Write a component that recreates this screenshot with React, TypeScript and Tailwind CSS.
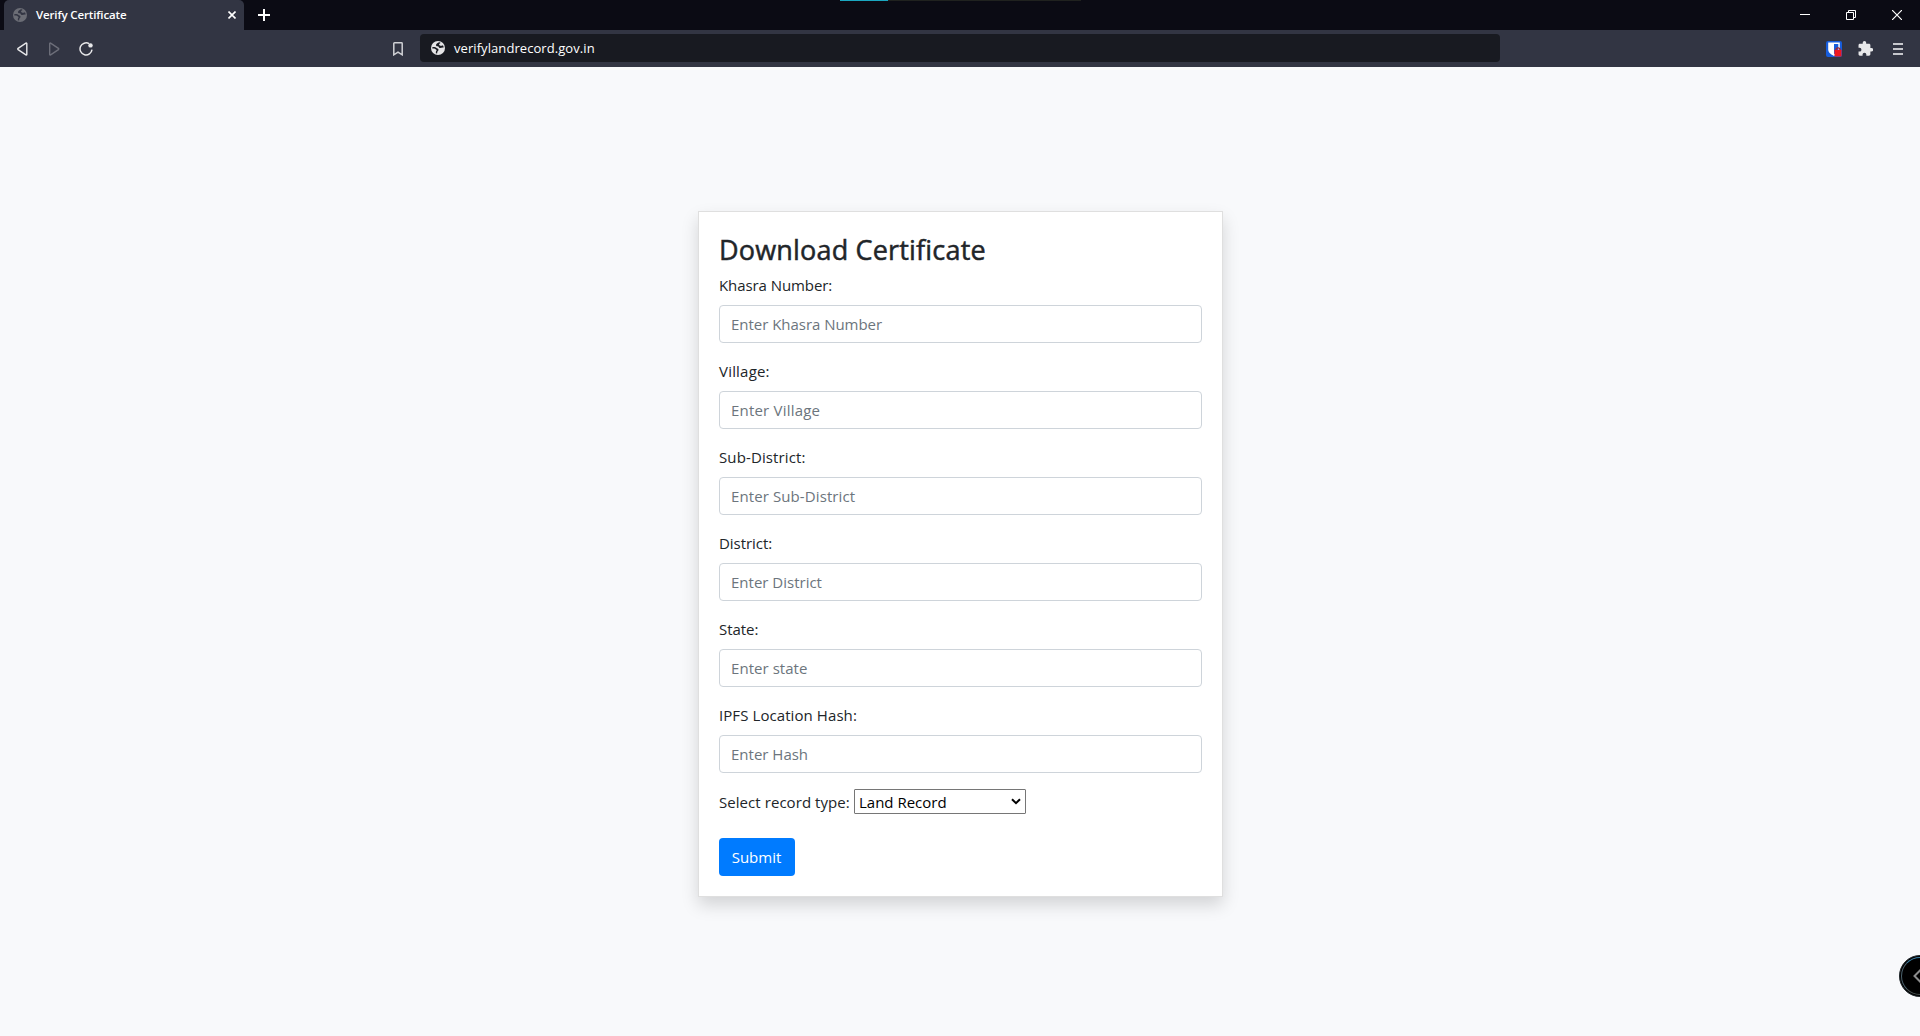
import React from "react";

type Field = { label: string; placeholder: string; labelClass: string; inputClass: string };

const fields: Field[] = [
  { label: "Khasra Number:", placeholder: "Enter Khasra Number", labelClass: "tracking-[-0.08px]", inputClass: "tracking-[-0.03px]" },
  { label: "Village:", placeholder: "Enter Village", labelClass: "tracking-[0.2px]", inputClass: "tracking-[0.2px]" },
  { label: "Sub-District:", placeholder: "Enter Sub-District", labelClass: "tracking-[0.12px]", inputClass: "tracking-[0.1px]" },
  { label: "District:", placeholder: "Enter District", labelClass: "tracking-[-0.05px]", inputClass: "" },
  { label: "State:", placeholder: "Enter state", labelClass: "tracking-[-0.05px]", inputClass: "tracking-[0.05px]" },
  { label: "IPFS Location Hash:", placeholder: "Enter Hash", labelClass: "tracking-[0.08px]", inputClass: "" },
];

function Globe({ className, cut }: { className: string; cut: string }) {
  return (
    <svg viewBox="0 0 14 14" className={className}>
      <circle cx="7" cy="7" r="7" fill="currentColor" />
      <path
        d="M8.800 1.300C7 1.600 5.200 2.600 5 4c-.1 1.100.9 1.300 1.900 1.200.9 0 .7 1.600 2 1.700 1.300.1 2.200-.7 3.800-.4-.1-.9-.4-1.600-.8-2.300-.9.300-1.700.8-2.500.5-.9-.4-1.500-.8-1.300-1.500.1-.6 1-.9 1.500-1.300z"
        fill={cut}
      />
      <path
        d="M1.300 6.200c1.600-.2 3.500-.1 4.200.8.500.6 1.500.5 1.900 1.200.4.900-.3 1.700-.9 2.200-.4.500-.1 1.300-.4 2.200l-1.300-.3c.2-1-.1-1.900.5-2.600.4-.5.5-.8-.1-1-.9-.2-1.200-.9-1.900-1.100-.7-.1-1.400 0-2 0z"
        fill={cut}
      />
    </svg>
  );
}

function TabStrip() {
  return (
    <div className="relative flex h-[30px] bg-[#0b0b14] pl-1">
      <div className="flex h-[30px] w-60 items-center rounded-t-[5px] bg-[#323543] pl-[9px] pr-2">
        <Globe className="size-[14px] shrink-0 text-[#6b6d75]" cut="#323543" />
        <span className="ml-[9px] flex-1 whitespace-nowrap text-[11.5px] font-semibold leading-[30px] tracking-[-0.13px] text-white">
          Verify Certificate
        </span>
        <svg viewBox="0 0 8 8" className="size-2 text-white">
          <path d="M.5.5l7 7M7.500.5l-7 7" stroke="currentColor" strokeWidth="1.6" />
        </svg>
      </div>
      <div className="flex items-center pl-[14px]">
        <svg viewBox="0 0 12 12" className="size-3 text-white">
          <path d="M6 0v12M0 6h12" stroke="currentColor" strokeWidth="2" />
        </svg>
      </div>
      <div className="ml-auto flex items-center gap-9 pr-[18px] text-white">
        <svg viewBox="0 0 10 10" className="size-[10px]">
          <path d="M0 4.500h10" stroke="currentColor" />
        </svg>
        <svg viewBox="0 0 10 10" className="mb-px size-[10px]">
          <path d="M.5 2.500h7v7h-7zM2.500 2.500v-2h7v7h-2" fill="none" stroke="currentColor" />
        </svg>
        <svg viewBox="0 0 10 10" className="mb-px size-[10px]">
          <path d="M0 0l10 10M10 0L0 10" stroke="currentColor" strokeWidth="1.2" />
        </svg>
      </div>
      <div className="absolute left-[840px] top-0 flex h-px w-[241px] bg-[#20221f]">
        <div className="w-12 bg-[#1ba7c0]" />
      </div>
    </div>
  );
}

function Toolbar() {
  return (
    <div className="flex h-[37px] items-center bg-[#323543]">
      <div className="flex w-[420px] items-center pl-[17px]">
        <svg viewBox="0 0 12 14" className="h-[14px] w-3 text-[#e8e8ea]">
          <path d="M9.800 1.600v10.800q0 .9-.9.400L1.100 7.600q-.7-.6 0-1.200L8.900 1.200q.9-.5.9.4z" fill="none" stroke="currentColor" strokeWidth="1.400" />
        </svg>
        <svg viewBox="0 0 12 14" className="ml-[19px] h-[14px] w-3 text-[#6c6e79]">
          <path d="M1.700 1.600v10.800q0 .9.900.400l7.800-5.200q.7-.6 0-1.200L2.600 1.200q-.9-.5-.9.400z" fill="none" stroke="currentColor" strokeWidth="1.400" />
        </svg>
        <svg viewBox="0 0 14 14" className="ml-[19px] size-[14px] text-[#e8e8ea]">
          <path d="M10.100 1.700A6 6 0 1 0 13 7.600" fill="none" stroke="currentColor" strokeWidth="1.500" />
          <circle cx="11.500" cy="3.400" r="2.200" fill="currentColor" />
        </svg>
        <svg viewBox="0 0 10 14" className="ml-auto mr-[17px] h-[14px] w-[10px] text-[#d0d1d5]">
          <path d="M.8 1.500q0-.7.700-.7h7q.7 0 .7.700v11.300L5 10.200.8 12.800z" fill="none" stroke="currentColor" strokeWidth="1.500" />
        </svg>
      </div>
      <div className="mb-px flex h-7 w-[1080px] items-center rounded bg-[#181a21] pl-[11px]">
        <Globe className="size-[14px] text-[#e4e4e6]" cut="#181a21" />
        <span className="ml-[9px] mt-px text-[13px] tracking-[0.07px] text-white">verifylandrecord.gov.in</span>
      </div>
      <div className="ml-auto flex items-center pr-[17px]">
        <svg viewBox="0 0 16 16" className="size-4">
          <rect width="16" height="16" rx="2" fill="#175ddc" />
          <path d="M2.200 1.500h11.600v7c0 3-2.600 4.800-5.800 6.500-3.200-1.700-5.800-3.500-5.800-6.500z" fill="#fff" />
          <path d="M8 3h4.300v5.500C12.300 10.700 10.500 12 8 13.300z" fill="#175ddc" />
          <path d="M10 10V8.800a2 2 0 0 1 4 0V10" fill="none" stroke="#a3222b" strokeWidth="1.300" />
          <rect x="8.500" y="8.800" width="7" height="6.700" rx=".5" fill="#ee1720" />
        </svg>
        <svg viewBox="1.500 1 21 21.500" className="ml-4 size-[15px] text-[#e8e8ea]">
          <path
            d="M20.500 11H19V7c0-1.100-.9-2-2-2h-4V3.500a2.500 2.500 0 0 0-5 0V5H4c-1.100 0-2 .9-2 2v3.800h1.500a2.700 2.700 0 0 1 0 5.400H2V20c0 1.100.9 2 2 2h3.800v-1.500a2.700 2.700 0 0 1 5.400 0V22H17c1.100 0 2-.9 2-2v-4h1.500a2.500 2.500 0 0 0 0-5z"
            fill="currentColor"
          />
        </svg>
        <div className="ml-5 flex w-[10px] flex-col gap-[3px]">
          <div className="h-0.5 bg-[#c6c7cc]" />
          <div className="h-0.5 bg-[#c6c7cc]" />
          <div className="h-0.5 bg-[#c6c7cc]" />
        </div>
      </div>
    </div>
  );
}

function CertificateForm() {
  return (
    <form
      onSubmit={(e) => e.preventDefault()}
      className="mt-36 h-[686px] w-[525px] border border-[#dfdfdf] bg-white p-5 text-[15px] leading-6 text-[#212529] shadow-[0_8px_16px_rgba(0,0,0,0.15)]"
    >
      <h3 className="mb-[7px] h-[34px] whitespace-nowrap pt-px text-[27px] font-normal leading-[33px] tracking-[0.18px] [-webkit-text-stroke:0.5px_#212529]">
        Download Certificate
      </h3>
      {fields.map((f) => (
        <div key={f.label} className="mb-4">
          <label className="mb-2 block">
            <span className={f.labelClass}>{f.label}</span>
          </label>
          <input
            placeholder={f.placeholder}
            className={
              "block h-[38px] w-full rounded border border-[#ced4da] bg-white py-1.5 pl-[11px] pr-3 placeholder:text-[#6c757d] placeholder:opacity-100 " +
              f.inputClass
            }
          />
        </div>
      ))}
      <div className="flex h-[25px] items-center">
        <label className="w-[135px] whitespace-nowrap tracking-[0.06px]">Select record type:</label>
        <div className="relative flex h-[25px] w-[172px] items-center rounded-[1px] border border-[#767676] bg-white">
          <select className="h-full w-full appearance-none bg-transparent pl-1 leading-6 text-black outline-none">
            <option>Land Record</option>
          </select>
          <svg viewBox="0 0 10 7" className="pointer-events-none absolute right-[4px] top-[8px] h-[7px] w-[10px]">
            <path d="M1 1.200l4 4 4-4" fill="none" stroke="#000" strokeWidth="2" />
          </svg>
        </div>
      </div>
      <button className="mt-6 block h-[38px] w-[76px] rounded bg-[#007bff] pr-px text-white">Submit</button>
    </form>
  );
}

export default function App() {
  return (
    <div className="relative flex h-[1036px] w-[1920px] flex-col overflow-hidden bg-[#f8f9fb] font-['Open_Sans','Noto_Sans',sans-serif]">
      <TabStrip />
      <Toolbar />
      <main className="flex flex-1 items-start pl-[698px]">
        <CertificateForm />
      </main>
      <div className="absolute left-[1899px] top-[955px] flex size-[42px] items-center rounded-full border border-[#1d2428] bg-black p-px">
        <div className="flex size-full items-center rounded-full border border-b-[#46504f] border-l-[#4d6470] border-r-[#4d6470] border-t-[#3f86ac] pl-[11px]">
          <svg viewBox="0 0 9 16" className="h-4 w-[9px]">
            <path d="M8.500 1l-7 7 7 7" fill="none" stroke="#8c8c8c" strokeWidth="2" />
          </svg>
        </div>
      </div>
    </div>
  );
}
